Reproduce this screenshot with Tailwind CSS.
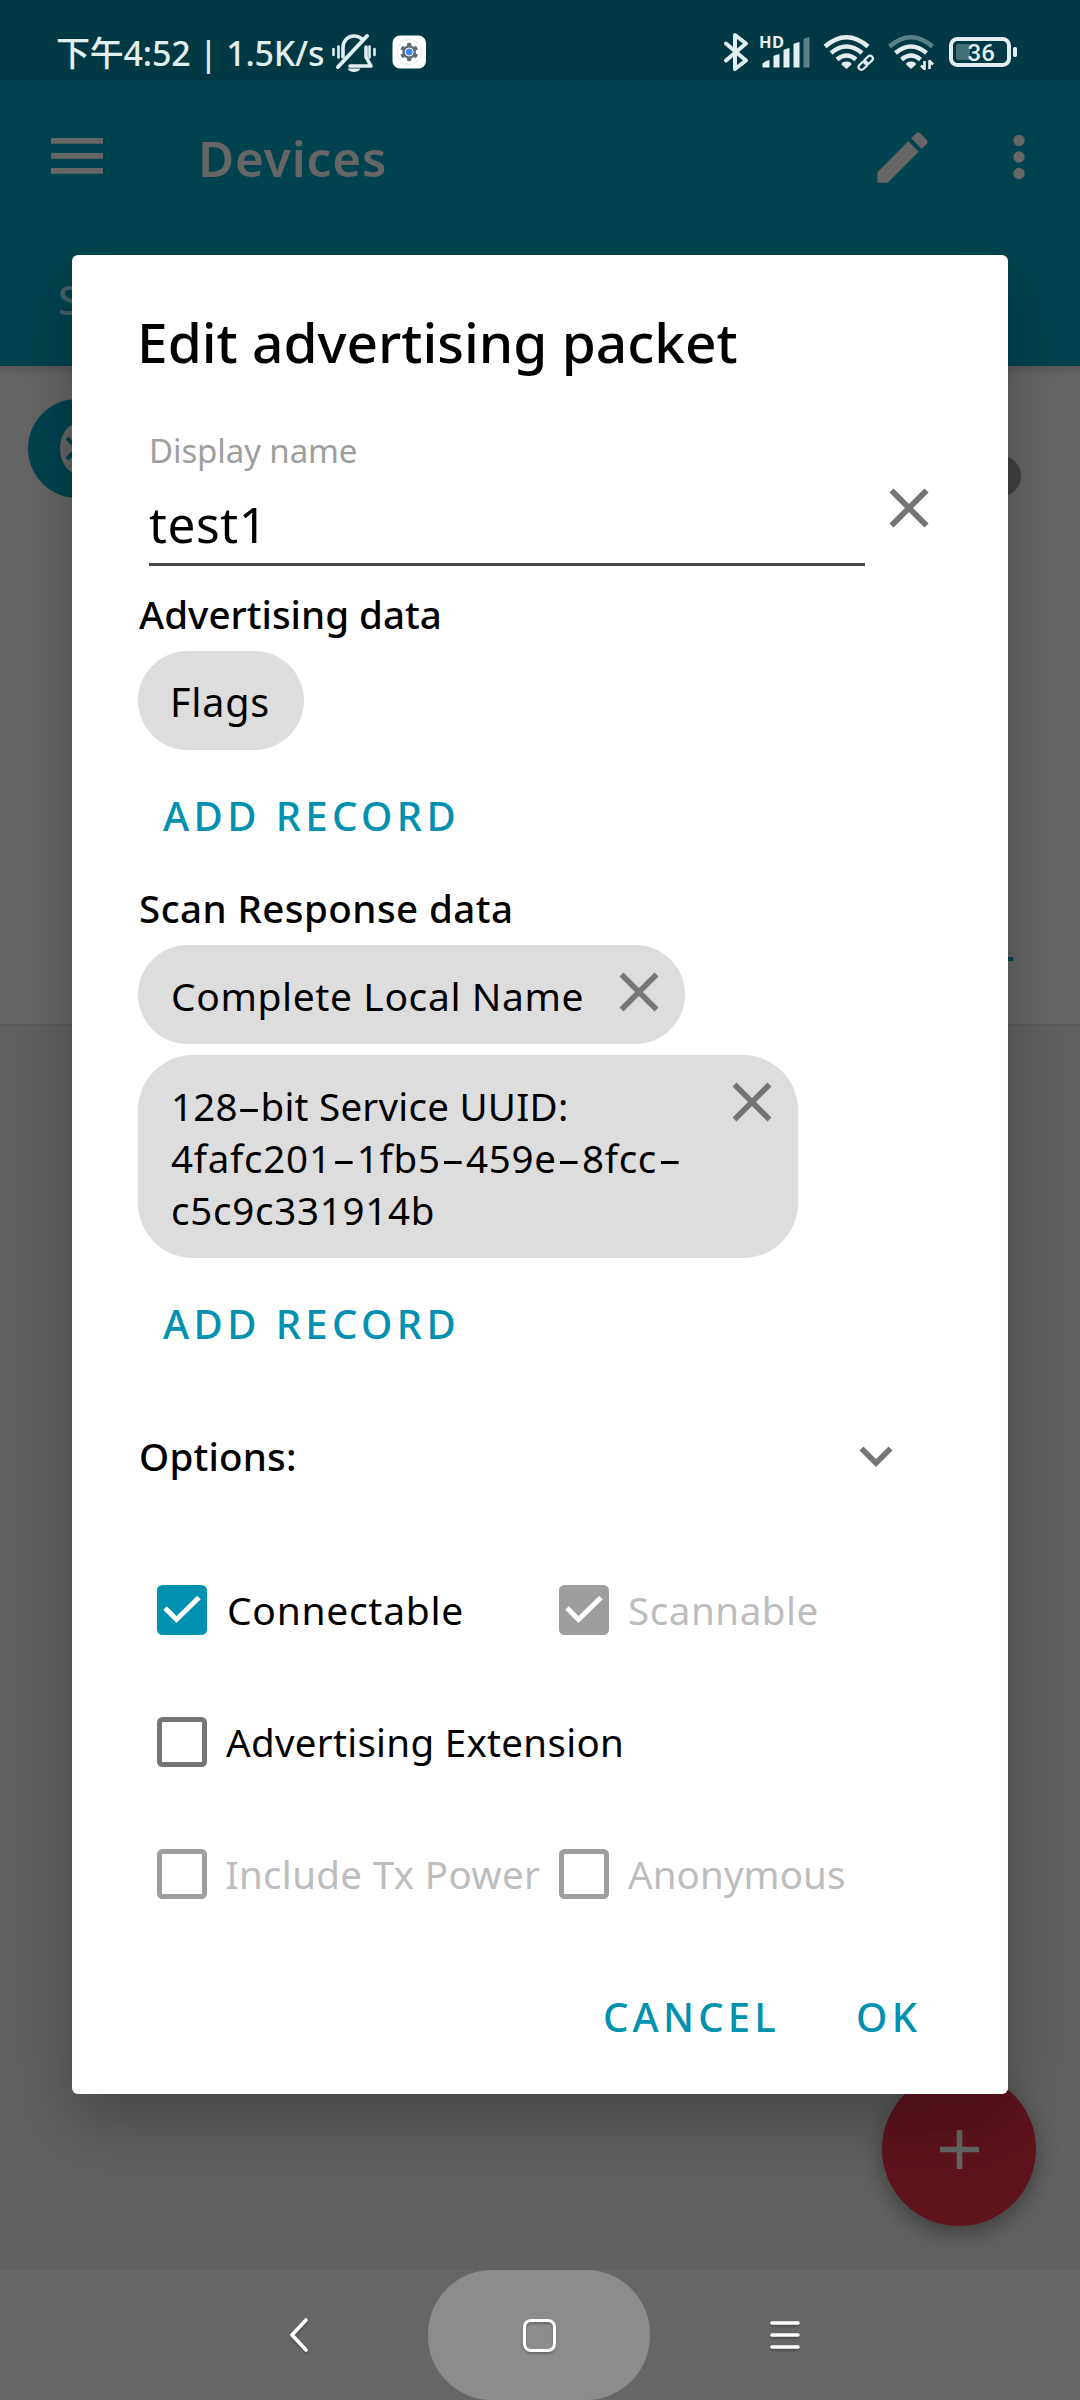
<!DOCTYPE html>
<html lang="en">
<head>
<meta charset="utf-8">
<title>Devices</title>
<script src="https://cdn.jsdelivr.net/npm/@tailwindcss/browser@4"></script>
</head>
<body class="bg-[#666]">
<div class="relative flex h-[2400px] w-[1080px] flex-col overflow-hidden font-['Noto_Sans','Noto_Sans_CJK_SC',sans-serif] text-[38.5px] leading-[52px] text-black">

  <!-- Status bar -->
  <header class="flex h-20 shrink-0 items-start bg-[#003943] text-[#e3eef0]">
    <div class="ml-14 mt-[30px] whitespace-pre text-[34px] font-medium leading-[46px] tracking-[-0.2px]">下午4:52 | 1.5K/s</div>
    <svg class="absolute left-[330px] top-[32px]" width="48" height="42" viewBox="330 32 48 42" fill="none" stroke="currentColor" stroke-linecap="round">
      <path d="M333.5 49v6M338.5 46.500v11M369.500 46.500v11M374.500 49v6" stroke-width="2.600"/>
      <path d="M343 57V48c0-7 4.500-12 11-12 3 0 5.500 1 7.500 2.700M366 47v10l5 9H350" stroke-width="3.600" stroke-linejoin="round"/>
      <path d="M367 36L338 67" stroke-width="4"/>
      <path d="M347.500 70h13c-1.500 2.700-4 3.500-6.500 3.500s-5-.8-6.500-3.500z" transform="translate(0 -1.500)" fill="currentColor" stroke="none"/>
    </svg>
    <svg class="absolute left-[392px] top-[35px]" width="35" height="34" viewBox="0 0 35 34">
      <rect x=".5" y=".5" width="33.500" height="33" rx="7.500" fill="#fff"/>
      <circle cx="17.200" cy="17" r="12.500" fill="none" stroke="#e0e0e0" stroke-width=".8"/>
      <circle cx="17.200" cy="17" r="6.800" fill="#5b6a73"/>
      <path d="M17.200 8v18M9.400 12.500l15.600 9M9.400 21.500l15.600-9" stroke="#5b6a73" stroke-width="4"/>
      <circle cx="17.200" cy="17" r="4" fill="#4285f4" stroke="#fff" stroke-width="1"/>
    </svg>
    <svg class="absolute left-[720px] top-[28px]" width="300" height="46" viewBox="720 28 300 46" fill="none" stroke="currentColor" stroke-linecap="round" stroke-linejoin="round">
      <path d="M726 43.500L746 60.500 735 69V35L746 43.500 726 60.500" stroke-width="4"/>
      <g fill="currentColor" stroke="none">
        <path d="M762.500 67.500v-4q3.500-3.300 7-3.500v7.500zM773.500 67.500V56q3-1.500 6-2v13.500zM783.500 67.500V50q3-1.500 6-2v19.500zM793.500 67.500V44q3-1.500 6-2v25.500z"/>
        <path d="M803.500 67.500V39q3-1.500 6-2v30.500z" opacity=".4"/>
        <path d="M846.500 69l-5-4.500q0-3 5-3t5 3zM911 69l-5-4.500q0-3 5-3t5 3z"/>
      </g>
      <g stroke-width="4.500" stroke-linecap="butt">
        <path d="M825 46.500q21.500-18.500 43 0M831 53q15.500-13 31 0M837 59.500q9.500-8 19 0"/>
        <path d="M889.500 46.500q21.500-18.500 43 0" opacity=".4"/>
        <path d="M895.500 53q15.500-13 31 0M901.500 59.500q9.500-8 19 0"/>
      </g>
      <g stroke-width="2.200">
        <rect x="-5" y="-2.800" width="10" height="5.600" rx="2.800" transform="translate(868.500 60) rotate(-45)"/>
        <rect x="-5" y="-2.800" width="10" height="5.600" rx="2.800" transform="translate(863 65.500) rotate(-45)"/>
      </g>
      <path d="M924.500 61v8l-3.500-3.500M929.500 69v-8l3.500 3.500" stroke-width="2.600" stroke-linecap="butt"/>
      <rect x="951" y="39" width="58" height="26" rx="6.500" stroke-width="4"/>
      <rect x="956" y="44" width="14" height="16" rx="2" fill="currentColor" stroke="none" opacity=".3"/>
      <rect x="1013" y="47" width="4" height="10" rx="1.800" fill="currentColor" stroke="none"/>
      <text x="759" y="48" font-size="16.500" font-weight="700" textLength="25" fill="currentColor" stroke="none">HD</text>
      <text x="967.500" y="61" font-size="24" font-weight="500" textLength="27.500" fill="currentColor" stroke="none" font-family="Roboto">36</text>
    </svg>
  </header>

  <!-- App bar with tabs -->
  <div class="flex h-[286px] shrink-0 flex-col bg-[#00434f] text-[#666]">
    <div class="flex h-[154px] items-center">
      <svg class="-mt-0.5 ml-[51px]" width="52" height="36" viewBox="0 0 52 36" fill="currentColor"><path d="M0 0h52v5.700H0zM0 15h52v5.700H0zM0 30h52v5.700H0z"/></svg>
      <h1 class="ml-[95px] mt-0.5 text-[49.5px] font-semibold leading-[66px] tracking-[0.8px]">Devices</h1>
      <svg class="ml-auto" width="67" height="67" viewBox="0 0 24 24" fill="currentColor"><path d="M3 17.250V21h3.750L17.810 9.940l-3.750-3.750L3 17.250zM20.710 7.040c.39-.39.39-1.020 0-1.410l-2.340-2.340c-.39-.39-1.020-.39-1.410 0l-1.830 1.830 3.750 3.750 1.830-1.830z"/></svg>
      <svg class="mr-[55px] ml-[77px]" width="12" height="46" viewBox="0 0 12 46" fill="currentColor"><circle cx="6" cy="6.500" r="5.700"/><circle cx="6" cy="23" r="5.700"/><circle cx="6" cy="39.500" r="5.700"/></svg>
    </div>
    <div class="mt-10 pl-[58px] text-[40px] font-medium text-[#476066]">S</div>
  </div>

  <!-- Advertiser card -->
  <div class="flex h-[660px] shrink-0 justify-between border-b-2 border-[#5b5b5b] bg-[#666] shadow-[inset_0_8px_8px_-4px_rgba(0,0,0,0.15)]">
    <svg class="ml-7 mt-[33px]" width="99" height="99" viewBox="0 0 99 99"><circle cx="49.500" cy="49.500" r="49.500" fill="#00434f"/><ellipse cx="49.500" cy="49.500" rx="17.500" ry="25" fill="#666"/><path d="M39 39l21 21-10.500 10V29L60 39 39 60" fill="none" stroke="#00434f" stroke-width="4"/></svg>
    <div class="flex flex-col items-end">
      <div class="mr-[59px] mt-[90px] size-10 rounded-full bg-[#424242]"></div>
      <div class="mr-[67px] mt-[461px] h-1 w-20 bg-[#00434f]"></div>
    </div>
  </div>

  <div class="relative grow bg-[#616161]">
    <button class="absolute right-11 bottom-11 flex size-[154px] items-center justify-center rounded-full bg-[#5f131d] shadow-[0_8px_22px_rgba(0,0,0,0.35)]">
      <svg width="39" height="39" viewBox="0 0 39 39" stroke="#666" stroke-width="5.600"><path d="M0 19.500h39M19.500 0v39"/></svg>
    </button>
  </div>

  <!-- System navigation -->
  <nav class="relative z-10 grid h-[130px] shrink-0 grid-cols-[428px_222px_430px] items-center bg-[#666] text-white">
    <svg class="ml-[286px] drop-shadow-[0_2px_1px_rgba(0,0,0,0.25)]" width="26" height="38" viewBox="0 0 26 38" fill="none" stroke="currentColor" stroke-width="3.600" stroke-linecap="round" stroke-linejoin="round"><path d="M20 4L6 19l14 15"/></svg>
    <div class="flex h-full items-center justify-center rounded-[64px] bg-[#8c8c8c]">
      <div class="size-[33px] rounded-[8px] border-[3.6px] border-white drop-shadow-[0_2px_1px_rgba(0,0,0,0.25)]"></div>
    </div>
    <svg class="ml-[119px] drop-shadow-[0_2px_1px_rgba(0,0,0,0.25)]" width="32" height="30" viewBox="0 0 32 30" fill="none" stroke="currentColor" stroke-width="3.600" stroke-linecap="round"><path d="M3 3h26M3 15h26M3 27h26"/></svg>
  </nav>

  <!-- Dialog -->
  <div class="absolute inset-x-0 top-[255px] flex justify-center">
    <section class="flex h-[1839px] w-[936px] flex-col rounded-[6px] bg-white px-[66px] pt-[50px] shadow-[0_28px_66px_rgba(0,0,0,0.28)]">
      <h2 class="-ml-px text-[55px] font-medium leading-[74px]">Edit advertising packet</h2>

      <div class="mt-[50px] flex">
        <div class="ml-[11px] flex w-[716px] flex-col border-b-3 border-[#4a4a4a] pb-[6px]">
          <label class="text-[33px] leading-[44px] tracking-[-0.1px] text-[#9e9e9e]">Display name</label>
          <div class="mt-[18px] text-[49.5px] leading-[66px] tracking-[0.6px]">test1</div>
        </div>
        <svg class="mt-[59px] ml-6" width="40" height="40" viewBox="0 0 40 40" stroke="#757575" stroke-width="5.800"><path d="M2.500 2.500l35 35M37.500 2.500l-35 35"/></svg>
      </div>

      <h3 class="mt-[22px] ml-px font-medium">Advertising data</h3>
      <div class="mt-[11px] h-[99px] w-[166px] rounded-[50px] bg-[#ddd] pt-[25px] pl-8 text-[39.5px] tracking-[0.8px]">Flags</div>
      <button class="mt-10 ml-[25px] self-start text-[40px] font-medium tracking-[4.4px] text-[#0090b0]"><span class="whitespace-nowrap">ADD RECORD</span></button>

      <h3 class="mt-10 ml-px font-medium tracking-[0.45px]">Scan Response data</h3>
      <div class="mt-[11px] flex h-[99px] w-[547px] rounded-[50px] bg-[#ddd] pt-[25px] pr-[26px] pl-[33px]">
        <span class="grow whitespace-nowrap text-[39px] tracking-[0.6px]">Complete Local Name</span>
        <svg class="mt-0.5" width="40" height="40" viewBox="0 0 40 40" stroke="#757575" stroke-width="5.600"><path d="M2.500 2.500l35 35M37.500 2.500l-35 35"/></svg>
      </div>
      <div class="mt-[11px] flex h-[203px] w-[660px] rounded-[55px] bg-[#ddd] pt-[25px] pr-[26px] pl-[33px]">
        <div class="grow whitespace-nowrap">
          <div class="tracking-[0.25px]">128<span class="mx-[5px] inline-block scale-x-[1.9]">-</span>bit Service UUID:</div>
          <div class="tracking-[0.75px]">4fafc201<span class="mx-[6px] inline-block scale-x-[1.9]">-</span>1fb5<span class="mx-[6px] inline-block scale-x-[1.9]">-</span>459e<span class="mx-[6px] inline-block scale-x-[1.9]">-</span>8fcc<span class="mx-[7px] inline-block scale-x-[1.9]">-</span></div>
          <div class="tracking-[0.75px]">c5c9c331914b</div>
        </div>
        <svg class="mt-0.5" width="40" height="40" viewBox="0 0 40 40" stroke="#757575" stroke-width="5.600"><path d="M2.500 2.500l35 35M37.500 2.500l-35 35"/></svg>
      </div>
      <button class="mt-10 ml-[25px] self-start text-[40px] font-medium tracking-[4.4px] text-[#0090b0]"><span class="whitespace-nowrap">ADD RECORD</span></button>

      <div class="mt-20 flex items-center justify-between pr-[49px] pl-px">
        <h3 class="font-medium tracking-[0.2px]">Options:</h3>
        <svg class="mt-0.5" width="34" height="22" viewBox="0 0 34 22" fill="none" stroke="#757575" stroke-width="5.600"><path d="M2.500 2.500L17 17 31.500 2.500"/></svg>
      </div>

      <div class="mt-[102px] ml-[19px] grid grid-cols-[402px_1fr] gap-y-20 whitespace-nowrap">
        <div class="flex items-center gap-5">
          <svg width="50" height="50" viewBox="0 0 50 50"><rect width="50" height="50" rx="5.500" fill="#0090b0"/><path d="M8 23l11.500 11.500L42 12.500" fill="none" stroke="#fff" stroke-width="5"/></svg>
          <span class="text-[39px] tracking-[0.7px]">Connectable</span>
        </div>
        <div class="flex items-center gap-5 text-[#bdbdbd]">
          <svg width="50" height="50" viewBox="0 0 50 50"><rect width="50" height="50" rx="5.500" fill="#9e9e9e"/><path d="M8 23l11.500 11.500L42 12.500" fill="none" stroke="#fff" stroke-width="5"/></svg>
          <span class="-ml-px tracking-[0.57px]">Scannable</span>
        </div>
        <div class="col-span-2 flex items-center gap-5">
          <span class="size-[50px] rounded-[5.5px] border-[5.5px] border-[#757575]"></span>
          <span class="-ml-px tracking-[0.3px]">Advertising Extension</span>
        </div>
        <div class="flex items-center gap-5 text-[#bdbdbd]">
          <span class="size-[50px] rounded-[5.5px] border-[5.5px] border-[#9e9e9e]"></span>
          <span class="-ml-[1.5px] tracking-[0.35px]">Include Tx Power</span>
        </div>
        <div class="flex items-center gap-5 text-[#bdbdbd]">
          <span class="size-[50px] rounded-[5.5px] border-[5.5px] border-[#9e9e9e]"></span>
          <span class="-ml-px tracking-[0.1px]">Anonymous</span>
        </div>
      </div>

      <div class="mt-[91px] flex pl-[465px] text-[40px] font-medium text-[#0090b0]">
        <button class="w-[253px] shrink-0 text-left tracking-[4.2px]">CANCEL</button>
        <button class="tracking-[4.5px]">OK</button>
      </div>
    </section>
  </div>
</div>
</body>
</html>
